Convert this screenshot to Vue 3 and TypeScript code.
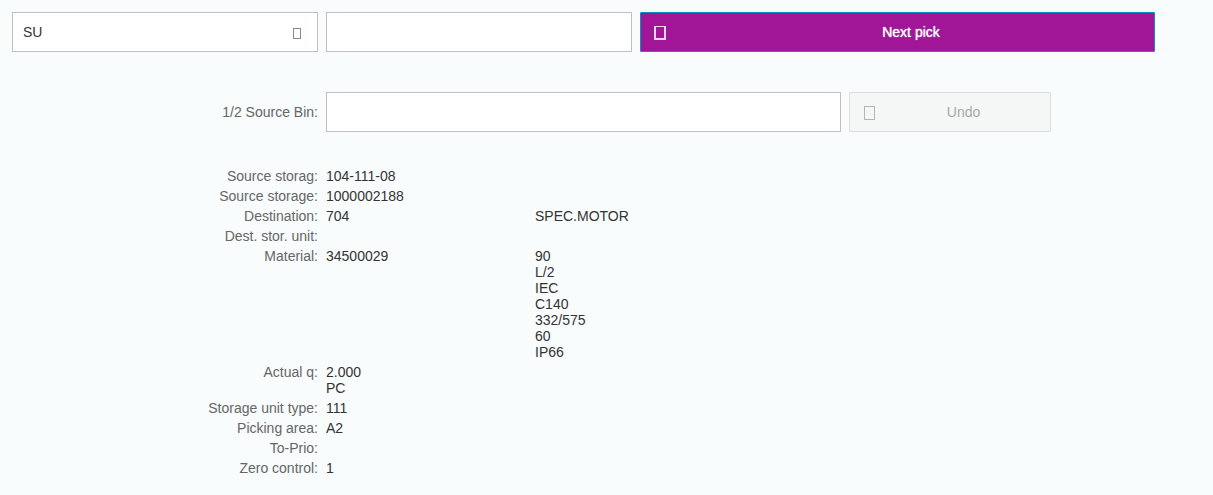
<script setup lang="ts">
interface Row {
  label: string
  value: string[]
  extra?: string[]
}

const rows: Row[] = [
  { label: 'Source storag:', value: ['104-111-08'] },
  { label: 'Source storage:', value: ['1000002188'] },
  { label: 'Destination:', value: ['704'], extra: ['SPEC.MOTOR'] },
  { label: 'Dest. stor. unit:', value: [] },
  { label: 'Material:', value: ['34500029'], extra: ['90', 'L/2', 'IEC', 'C140', '332/575', '60', 'IP66'] },
  { label: 'Actual q:', value: ['2.000', 'PC'] },
  { label: 'Storage unit type:', value: ['111'] },
  { label: 'Picking area:', value: ['A2'] },
  { label: 'To-Prio:', value: [] },
  { label: 'Zero control:', value: ['1'] },
]
</script>

<template>
  <div class="page">
    <div class="top-row">
      <div class="select">
        <span class="select-text">SU</span>
        <span class="tofu tofu-small"></span>
      </div>
      <input class="field" type="text" />
      <button class="btn btn-primary" type="button">
        <span class="tofu"></span>
        <span class="btn-label">Next pick</span>
      </button>
    </div>

    <div class="scan-row">
      <label class="label">1/2 Source Bin:</label>
      <input class="field" type="text" />
      <button class="btn btn-disabled" type="button" disabled>
        <span class="tofu"></span>
        <span class="btn-label">Undo</span>
      </button>
    </div>

    <div class="details">
      <div v-for="row in rows" :key="row.label" class="detail-row">
        <div class="label">{{ row.label }}</div>
        <div class="value">
          <div v-for="line in row.value" :key="line">{{ line }}</div>
        </div>
        <div class="value">
          <div v-for="line in row.extra" :key="line">{{ line }}</div>
        </div>
      </div>
    </div>
  </div>
</template>

<style>
html,
body {
  background: #f8fcfd;
}
</style>

<style scoped>
.page {
  padding: 12px;
  height: 495px;
  box-sizing: border-box;
  overflow: hidden;
  font-family: "Liberation Sans", Arial, sans-serif;
  font-size: 14px;
  line-height: 16px;
  color: #333;
}
.top-row {
  display: grid;
  grid-template-columns: 306px 306px 515px;
  column-gap: 8px;
  height: 40px;
}
.scan-row {
  display: grid;
  grid-template-columns: 306px 515px 202px;
  column-gap: 8px;
  height: 40px;
  margin-top: 40px;
  align-items: center;
}
.select {
  display: flex;
  align-items: center;
  justify-content: space-between;
  box-sizing: border-box;
  padding: 0 16px 0 10px;
  height: 40px;
  background: #fff;
  border: 1px solid #bfbfbf;
}
.select-text {
  margin-top: -1px;
}
.field {
  box-sizing: border-box;
  width: 100%;
  height: 40px;
  margin: 0;
  padding: 0 10px;
  background: #fff;
  border: 1px solid #bfbfbf;
  border-radius: 0;
  outline: none;
}
.btn {
  display: flex;
  align-items: center;
  box-sizing: border-box;
  height: 40px;
  margin: 0;
  padding: 0 0 0 13px;
  font: inherit;
}
.btn-label {
  flex: 1;
  padding-left: 2px;
  text-align: center;
}
.btn-primary {
  background: #a01696;
  border: 1px solid #0091c8;
  border-radius: 1px;
  color: #fff;
  text-shadow: 0 0 1px #fff;
}
.btn-disabled {
  background: #f5f6f6;
  border: 1px solid #dedede;
  border-radius: 2px;
  color: #a9a9a9;
  padding-left: 14px;
}
.tofu {
  display: block;
  box-sizing: border-box;
  width: 12px;
  height: 14px;
  margin-top: 2px;
  border: 1px solid currentColor;
}
.btn-primary .tofu {
  border-color: #f0d8ee;
  border-width: 1px 2px 2px 2px;
  box-shadow: none;
}
.btn-disabled .tofu {
  width: 11px;
  border-color: #b5b5b5;
}
.tofu-small {
  width: 8px;
  height: 11px;
  margin-top: 3px;
  border-color: #8a8a8a;
}
.label {
  color: #666;
  text-align: right;
}
.details {
  margin-top: 34px;
}
.detail-row {
  display: grid;
  grid-template-columns: 306px 201px 1fr;
  column-gap: 8px;
  padding: 2px 0;
  min-height: 16px;
}
</style>
